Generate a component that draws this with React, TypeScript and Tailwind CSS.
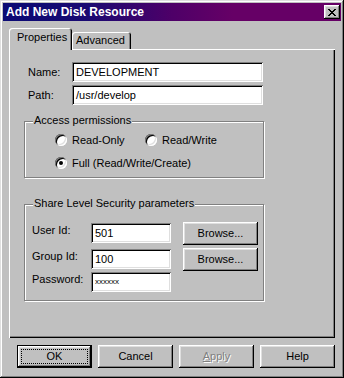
import React from "react";

const raised =
  "shadow-[inset_-1px_-1px_0_#000,inset_1px_1px_0_#fff,inset_-2px_-2px_0_#808080,inset_2px_2px_0_#dfdfdf]";
const sunken =
  "shadow-[inset_1px_1px_0_#808080,inset_-1px_-1px_0_#fff,inset_2px_2px_0_#000,inset_-2px_-2px_0_#dfdfdf]";

function CloseGlyph() {
  // pixel X used by the classic caption button
  const rows = ["11000011", "01100110", "00111100", "00011000", "00111100", "01100110", "11000011"];
  return (
    <svg width="8" height="7" viewBox="0 0 8 7" shapeRendering="crispEdges">
      {rows.map((r, y) =>
        r.split("").map((c, x) => (c === "1" ? <rect key={`${x}-${y}`} x={x} y={y} width="1" height="1" fill="#000" /> : null))
      )}
    </svg>
  );
}

function Field({ value, width, small }: { value: string; width: string; small?: boolean }) {
  return (
    <div className={`${width} h-[20px] bg-white ${sunken} flex items-center pl-[4px] ${small ? "text-[8px]" : ""}`}>
      {value}
    </div>
  );
}

function Radio({ label, checked }: { label: string; checked?: boolean }) {
  return (
    <div className="flex items-center h-[14px]">
      <span
        className={`w-[12px] h-[12px] rounded-full bg-white flex items-center justify-center shadow-[inset_1px_1px_0_#808080,inset_-1px_-1px_0_#fff,inset_2px_2px_0_#000,inset_-2px_-2px_0_#dfdfdf]`}
      >
        {checked && <span className="w-[4px] h-[4px] rounded-full bg-black" />}
      </span>
      <span className="ml-[5px]">{label}</span>
    </div>
  );
}

function Group({ title, height, children }: { title: string; height: string; children: React.ReactNode }) {
  return (
    <div className={`relative w-[240px] ${height} border border-[#808080] shadow-[inset_1px_1px_0_#fff,1px_1px_0_#fff]`}>
      <span className="absolute -top-[8px] left-[8px] px-[1px] bg-[#c0c0c0] leading-[13px]">{title}</span>
      {children}
    </div>
  );
}

function Button({ children, className = "" }: { children: React.ReactNode; className?: string }) {
  return (
    <div className={`h-[23px] w-[75px] flex items-center justify-center ${raised} ${className}`}>{children}</div>
  );
}

export default function App() {
  return (
    <div
      className="w-[344px] h-[378px] bg-[#c0c0c0] p-[3px] flex flex-col text-[11px] text-black font-['Liberation_Sans',Arial,sans-serif] shadow-[inset_-1px_-1px_0_#000,inset_1px_1px_0_#dfdfdf,inset_-2px_-2px_0_#808080,inset_2px_2px_0_#fff]"
    >
      {/* caption */}
      <div className="h-[18px] flex items-center justify-between pl-[3px] pr-[1px] bg-[linear-gradient(to_right,#0a0a74_0%,#1a0a72_25%,#4e0068_50%,#660066_68%,#660066_100%)]">
        <span className="text-white font-bold text-[12px] leading-none">Add New Disk Resource</span>
        <div className={`w-[16px] h-[14px] bg-[#c0c0c0] flex items-center justify-center ${raised}`}>
          <CloseGlyph />
        </div>
      </div>

      <div className="flex flex-col pl-[6px] mt-[7px]">
        {/* tabs */}
        <div className="flex items-end h-[22px]">
          <div className="relative z-10 h-[22px] w-[63px] bg-[#c0c0c0] rounded-t-[3px] pl-[8px] pb-[3px] flex items-center shadow-[inset_1px_1px_0_#fff,inset_-1px_0_0_#000,inset_-2px_0_0_#808080]">
            Properties
          </div>
          <div className="h-[18px] w-[59px] rounded-t-[3px] pl-[4px] pb-[1px] flex items-center shadow-[inset_1px_1px_0_#fff,inset_-1px_0_0_#000,inset_-2px_0_0_#808080]">
            Advanced
          </div>
        </div>

        {/* panel */}
        <div className="-mt-[1px] w-[326px] h-[289px] pt-[13px] pl-[15px] shadow-[inset_1px_1px_0_#fff,inset_-1px_-1px_0_#000,inset_-2px_-2px_0_#808080]">
          <div className="flex flex-col gap-[3px] pl-[4px]">
            <div className="flex items-center">
              <span className="w-[44px]">Name:</span>
              <Field value="DEVELOPMENT" width="w-[191px]" />
            </div>
            <div className="flex items-center">
              <span className="w-[44px]">Path:</span>
              <Field value="/usr/develop" width="w-[191px]" />
            </div>
          </div>

          <div className="mt-[16px]">
            <Group title="Access permissions" height="h-[57px]">
              <div className="flex flex-col gap-[9px] pl-[30px] pt-[11px]">
                <div className="flex">
                  <div className="w-[90px]">
                    <Radio label="Read-Only" />
                  </div>
                  <Radio label="Read/Write" />
                </div>
                <Radio label="Full (Read/Write/Create)" checked />
              </div>
            </Group>
          </div>

          <div className="mt-[26px]">
            <Group title="Share Level Security parameters" height="h-[97px]">
              <div className="flex flex-col pl-[7px] pt-[17px]">
                <div className="flex items-center h-[22px]">
                  <span className="w-[59px] mb-[6px]">User Id:</span>
                  <Field value="501" width="w-[80px]" />
                  <Button className="ml-[12px] w-[63px] h-[22px]">Browse...</Button>
                </div>
                <div className="flex items-center h-[22px] mt-[4px]">
                  <span className="w-[59px] mb-[6px]">Group Id:</span>
                  <Field value="100" width="w-[80px]" />
                  <Button className="ml-[12px] w-[63px] h-[22px]">Browse...</Button>
                </div>
                <div className="flex items-center h-[22px] mt-[1px]">
                  <span className="w-[59px] mb-[6px]">Password:</span>
                  <Field value="xxxxxx" width="w-[80px]" small />
                </div>
              </div>
            </Group>
          </div>
        </div>

        {/* buttons */}
        <div className="flex gap-[6px] mt-[7px] pl-[8px]">
          <div className="h-[23px] w-[75px] border border-black">
            <div className={`h-full w-full p-[3px] ${raised}`}>
              <div className="h-full w-full border border-dotted border-black flex items-center justify-center">OK</div>
            </div>
          </div>
          <Button>Cancel</Button>
          <Button>
            <span className="text-[#808080] [text-shadow:1px_1px_0_#fff]">
              <u>A</u>pply
            </span>
          </Button>
          <Button>Help</Button>
        </div>
      </div>
    </div>
  );
}
